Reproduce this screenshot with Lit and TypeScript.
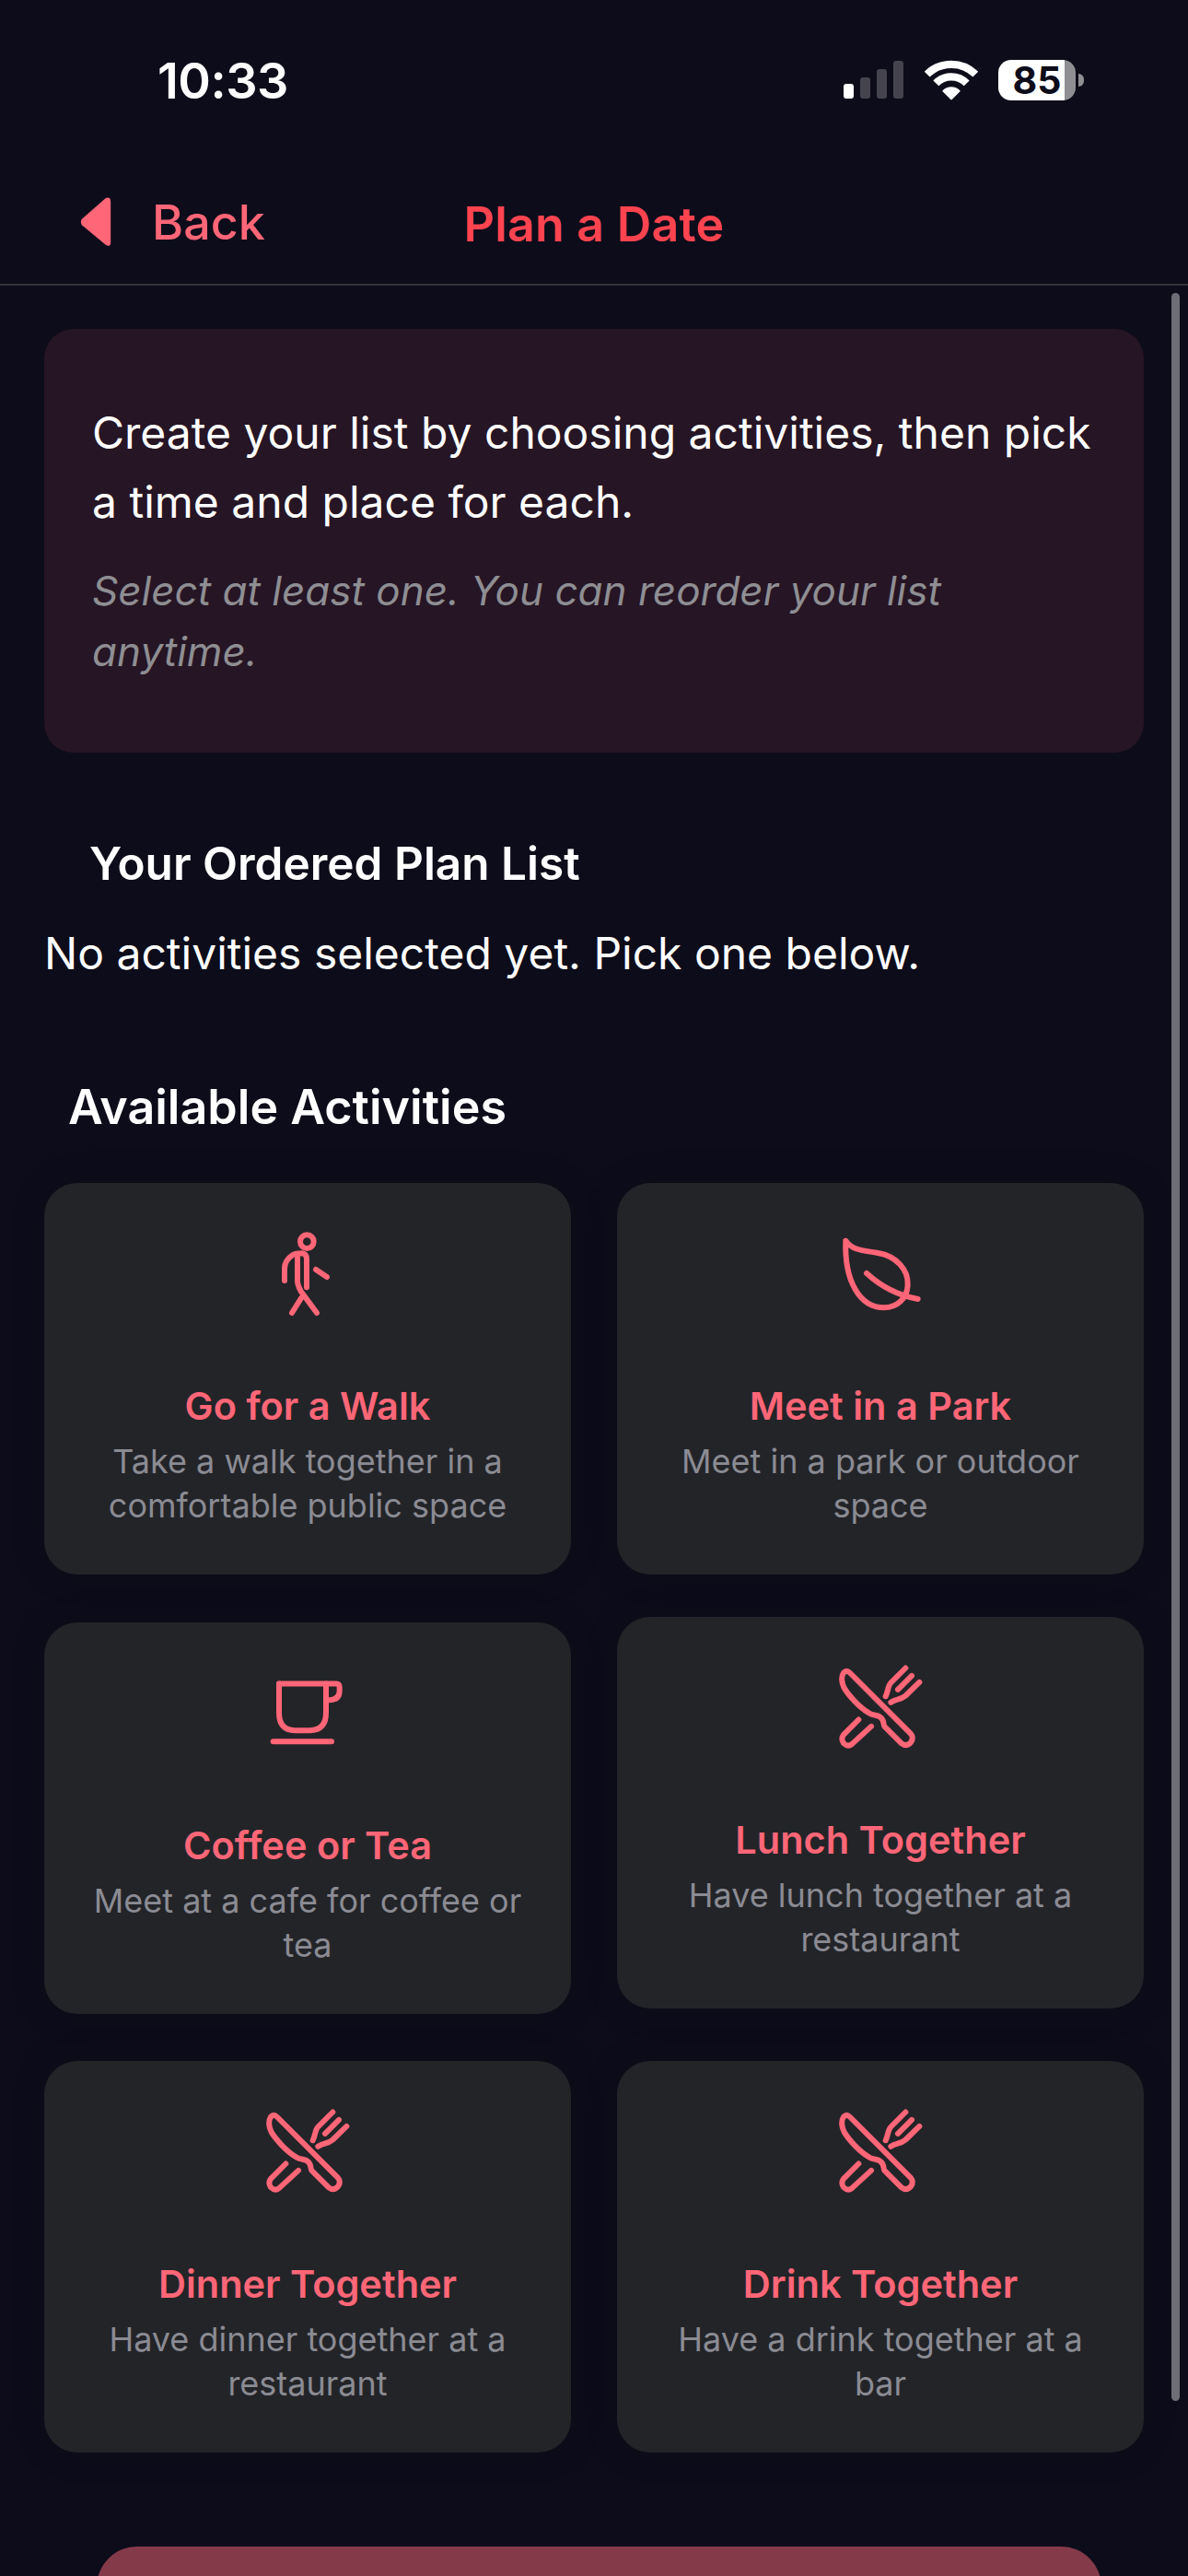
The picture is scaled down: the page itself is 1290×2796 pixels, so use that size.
import { LitElement, html, css, svg } from 'lit';
import { customElement } from 'lit/decorators.js';
import { classMap } from 'lit/directives/class-map.js';

const cutlery = svg`
  <path d="M78 75 Q88 65 98 75 L297 274 Q308 287 297 302 Q283 318 266 305 L212 251 C205 243 213 232 198 220 C188 212 175 216 160 206 C130 188 95 150 80 125 C72 108 70 88 78 75 Z" />
  <path d="M127 228 L78 277 Q68 290 78 305 Q92 318 105 308 L168 250" />
  <path d="M280 60 L232 108 C222 118 225 130 215 152" />
  <path d="M300 85 L255 130" />
  <path d="M325 106 L280 150 C262 165 250 160 232 172" />
`;

const icons = {
  walk: {
    box: '42 39 360 360',
    shape: svg`
      <circle cx="220" cy="113" r="22" />
      <path d="M147 240 V200 Q147 174 174 156 Q183 151 204 151 Q219 153 219 170 V262" />
      <path d="M189 165 V240 Q189 255 201 276 L252 345" />
      <path d="M249 204 L285 228" />
      <path d="M201 297 L171 345" />
    `,
  },
  leaf: {
    box: '18 9 360 360',
    shape: svg`
      <path d="M85 80 C110 115 150 112 190 120 C250 130 290 175 287 225 C285 270 250 298 210 298 C130 298 80 210 85 80 Z" />
      <path d="M153 186 C190 220 240 255 320 270" />
    `,
  },
  cup: {
    box: '12 -1.5 360 360',
    shape: svg`
      <path d="M99 81 H285 Q296 81 296 92 V105 Q296 134 262 134" />
      <path d="M99 81 V175 Q99 233 150 233 H200 Q252 233 252 175 V81" />
      <path d="M80 269 H270" />
    `,
  },
  cutlery: { box: '18 10.5 360 360', shape: cutlery },
};

type IconName = keyof typeof icons;

interface Activity {
  icon: IconName;
  title: string;
  desc: string;
  raised?: boolean;
}

const activities: Activity[] = [
  { icon: 'walk', title: 'Go for a Walk', desc: 'Take a walk together in a comfortable public space' },
  { icon: 'leaf', title: 'Meet in a Park', desc: 'Meet in a park or outdoor space' },
  { icon: 'cup', title: 'Coffee or Tea', desc: 'Meet at a cafe for coffee or tea' },
  { icon: 'cutlery', title: 'Lunch Together', desc: 'Have lunch together at a restaurant', raised: true },
  { icon: 'cutlery', title: 'Dinner Together', desc: 'Have dinner together at a restaurant' },
  { icon: 'cutlery', title: 'Drink Together', desc: 'Have a drink together at a bar' },
];

@customElement('app-root')
export class AppRoot extends LitElement {
  static styles = css`
    :host {
      display: block;
      position: relative;
      width: 1290px;
      height: 2796px;
      overflow: hidden;
      background: #0d0c1a;
      color: #fff;
      font-family: Inter, 'Noto Sans', sans-serif;
    }
    .status {
      height: 174px;
      display: flex;
      align-items: center;
      justify-content: space-between;
      padding: 0 113px 0 171px;
      box-sizing: border-box;
    }
    .time {
      font-size: 54px;
      font-weight: 600;
      letter-spacing: -0.5px;
    }
    .status-icons {
      display: flex;
      align-items: center;
    }
    .signal {
      width: 66px;
      height: 42px;
      margin-right: 22px;
    }
    .wifi {
      width: 58px;
      height: 44px;
      margin-right: 22px;
    }
    .battery {
      width: 84px;
      height: 44px;
      border-radius: 14px;
      background: linear-gradient(90deg, #fff 85.7%, #8e8e93 85.7%);
      color: #0d0c1a;
      font-size: 41px;
      font-weight: 700;
      line-height: 44px;
      text-align: center;
    }
    .battery-cap {
      width: 6px;
      height: 14px;
      margin-left: 3px;
      border-radius: 0 7px 7px 0;
      background: #8e8e93;
    }
    .nav {
      height: 134px;
      display: grid;
      grid-template-columns: 1fr auto 1fr;
      align-items: center;
      border-bottom: 2px solid #33333b;
    }
    .back {
      display: flex;
      align-items: center;
      gap: 43px;
      padding-left: 86px;
      color: #ff6677;
      font-size: 52px;
      font-weight: 500;
    }
    .back svg {
      width: 36px;
      height: 54px;
      fill: #ff6677;
    }
    .title {
      margin: 4px 0 0;
      color: #ff4450;
      font-size: 52px;
      font-weight: 600;
      letter-spacing: 0.2px;
    }
    .content {
      padding: 47px 48px 0;
    }
    .intro {
      padding: 75px 52px 77px;
      border-radius: 32px;
      background: #261524;
    }
    .intro-main {
      margin: 0 0 26px;
      font-size: 48px;
      line-height: 75px;
    }
    .intro-note {
      margin: 0;
      color: #8e8e93;
      font-size: 44px;
      font-style: italic;
      line-height: 66px;
    }
    .plan-title {
      margin: 86px 0 0 49px;
      font-size: 49.5px;
      font-weight: 600;
      line-height: 68px;
    }
    .empty {
      margin: 30px 0 0;
      font-size: 48px;
      line-height: 68px;
    }
    .activities-title {
      margin: 99px 0 0 26px;
      font-size: 52px;
      font-weight: 600;
      line-height: 68px;
    }
    .grid {
      display: grid;
      grid-template-columns: 1fr 1fr;
      gap: 51.5px 50px;
      margin-top: 48px;
    }
    .card {
      height: 425px;
      padding-top: 39px;
      box-sizing: border-box;
      border-radius: 36px;
      background: #232428;
      text-align: center;
      box-shadow: 0 0 40px rgba(0, 0, 0, 0.12);
    }
    .card.raised {
      margin-top: -6px;
      margin-bottom: 6px;
    }
    .card svg {
      display: block;
      width: 120px;
      height: 120px;
      margin: 0 auto 55px;
      fill: none;
      stroke: #ff6677;
      stroke-width: 18;
      stroke-linecap: round;
      stroke-linejoin: round;
    }
    .card-title {
      margin: 0 0 8px;
      color: #ff6677;
      font-size: 41.5px;
      font-weight: 600;
      line-height: 56px;
    }
    .card-desc {
      margin: 0 auto;
      padding: 0 40px;
      color: #8b8b93;
      font-size: 36px;
      line-height: 48px;
    }
    .submit {
      height: 140px;
      margin: 102px 46px 0 57px;
      border-radius: 44px;
      background: #853a4a;
    }
    .scrollbar {
      position: absolute;
      top: 318px;
      left: 1272px;
      width: 9px;
      height: 2288px;
      border-radius: 5px;
      background: #6e6e76;
    }
  `;

  private renderCard(item: Activity) {
    const icon = icons[item.icon];
    return html`
      <div class=${classMap({ card: true, raised: !!item.raised })}>
        <svg viewBox=${icon.box}>${icon.shape}</svg>
        <h3 class="card-title">${item.title}</h3>
        <p class="card-desc">${item.desc}</p>
      </div>
    `;
  }

  render() {
    return html`
      <div class="status">
        <span class="time">10:33</span>
        <div class="status-icons">
          <svg class="signal" viewBox="0 0 66 42">
            <rect x="0" y="25" width="11" height="16" rx="3" fill="#fff" />
            <rect x="18" y="18" width="11" height="23" rx="3" fill="#44434e" />
            <rect x="36" y="9" width="11" height="32" rx="3" fill="#44434e" />
            <rect x="54" y="0" width="11" height="41" rx="3" fill="#44434e" />
          </svg>
          <svg class="wifi" viewBox="0 0 174 132">
            <path d="M8 47 A112 112 0 0 1 166 47" fill="none" stroke="#fff" stroke-width="25" />
            <path d="M37 76 A70 70 0 0 1 137 76" fill="none" stroke="#fff" stroke-width="25" />
            <path d="M87 128 L60 101 A38 38 0 0 1 114 101 Z" fill="#fff" stroke="#fff" stroke-width="4" stroke-linejoin="round" />
          </svg>
          <div class="battery">85</div>
          <div class="battery-cap"></div>
        </div>
      </div>
      <header class="nav">
        <div class="back">
          <svg viewBox="0 0 32 50">
            <path d="M26 1 Q31 -1 31 5 V45 Q31 51 26 48 L2 28 Q0 25 2 22 Z" />
          </svg>
          <span>Back</span>
        </div>
        <h1 class="title">Plan a Date</h1>
        <div></div>
      </header>
      <main class="content">
        <section class="intro">
          <p class="intro-main">Create your list by choosing activities, then pick a time and place for each.</p>
          <p class="intro-note">Select at least one. You can reorder your list anytime.</p>
        </section>
        <h2 class="plan-title">Your Ordered Plan List</h2>
        <p class="empty">No activities selected yet. Pick one below.</p>
        <h2 class="activities-title">Available Activities</h2>
        <div class="grid">${activities.map((item) => this.renderCard(item))}</div>
        <div class="submit"></div>
      </main>
      <div class="scrollbar"></div>
    `;
  }
}
